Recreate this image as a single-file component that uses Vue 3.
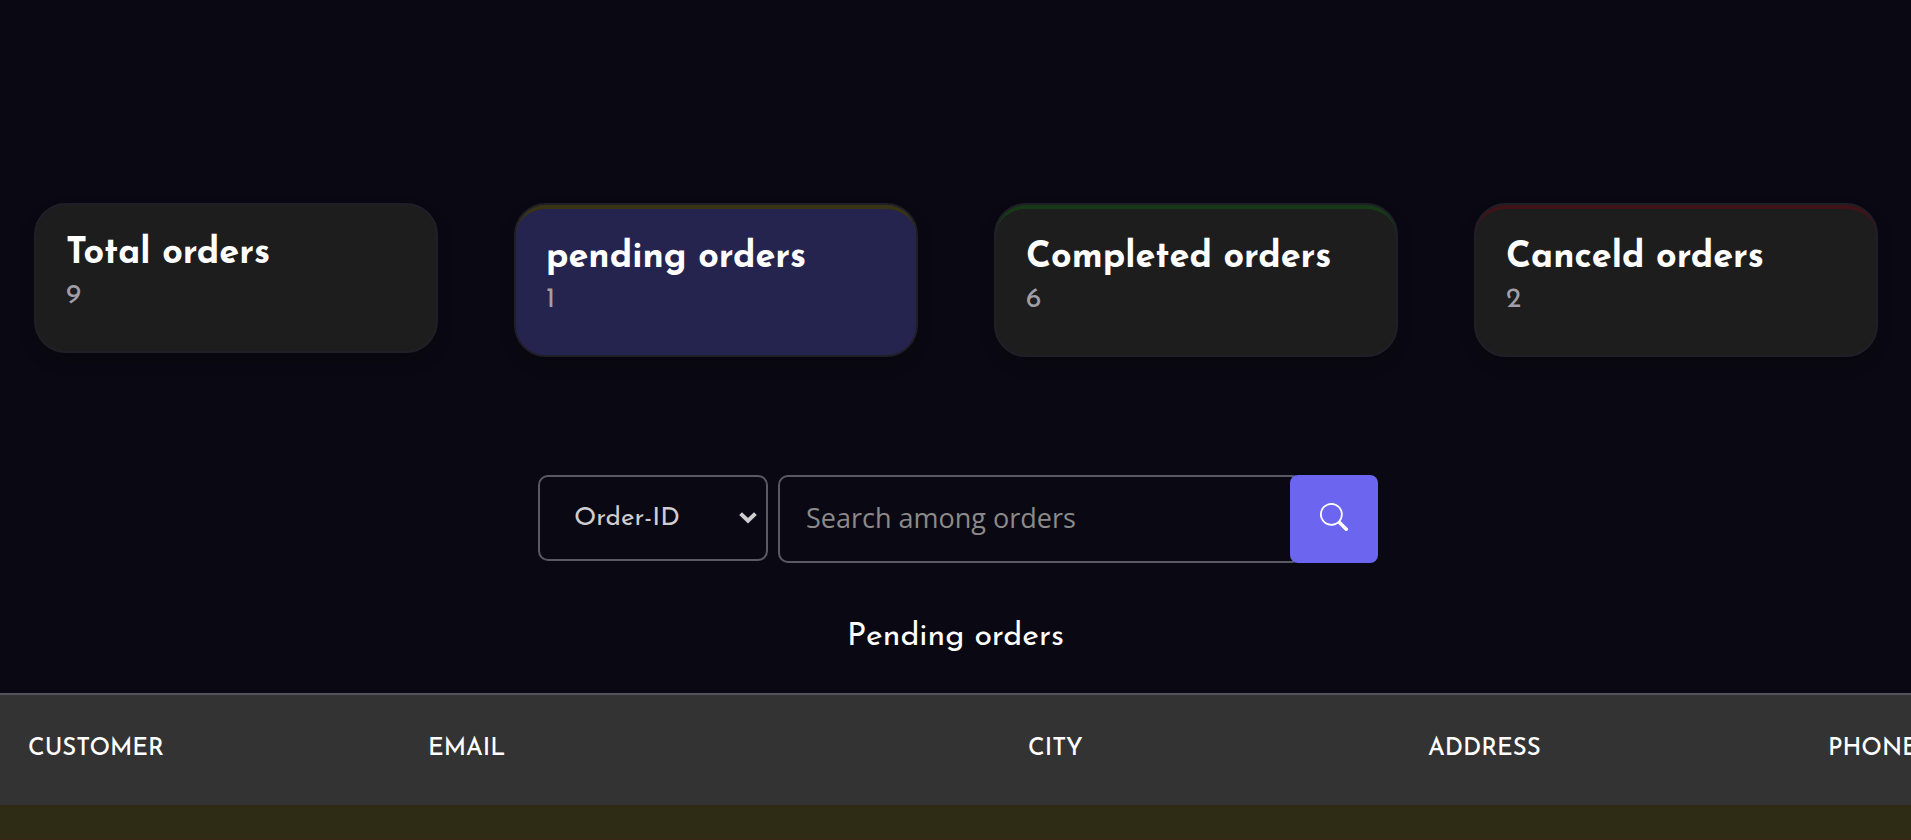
<script setup>
import { ref } from 'vue'

const cards = [
  { title: 'Total orders', count: 9, tone: 'total' },
  { title: 'pending orders', count: 1, tone: 'pending' },
  { title: 'Completed orders', count: 6, tone: 'completed' },
  { title: 'Canceld orders', count: 2, tone: 'canceled' },
]
const columns = ['customer', 'email', 'city', 'address', 'phone']
const field = ref('Order-ID')
const query = ref('')
</script>

<template>
  <main class="page">
    <section class="cards">
      <article v-for="card in cards" :key="card.tone" class="card" :class="card.tone">
        <div class="card-body">
          <h2>{{ card.title }}</h2>
          <p>{{ card.count }}</p>
        </div>
      </article>
    </section>

    <form class="search" @submit.prevent>
      <div class="picker">
        <select v-model="field" aria-label="Search field">
          <option>Order-ID</option>
        </select>
        <svg class="chevron" viewBox="0 0 18 12" aria-hidden="true">
          <path d="M1.6 1.6 L9 8.8 L16.4 1.6" fill="none" stroke="#cfcdd0" stroke-width="4" />
        </svg>
      </div>
      <div class="query">
        <input v-model="query" type="text" placeholder="Search among orders" aria-label="Search among orders" />
        <button type="submit" aria-label="Search">
          <svg viewBox="0 0 16 16" fill="currentColor" aria-hidden="true">
            <path d="M11.742 10.344a6.5 6.5 0 1 0-1.397 1.398h-.001c.03.04.062.078.098.115l3.85 3.85a1 1 0 0 0 1.415-1.414l-3.85-3.85a1.007 1.007 0 0 0-.115-.1zM12 6.5a5.5 5.5 0 1 1-11 0 5.5 5.5 0 0 1 11 0z" />
          </svg>
        </button>
      </div>
    </form>

    <h1>Pending orders</h1>

    <div class="table-wrap">
      <table>
        <thead>
          <tr>
            <th v-for="name in columns" :key="name" :class="name" scope="col">{{ name }}</th>
          </tr>
        </thead>
        <tbody>
          <tr>
            <td v-for="name in columns" :key="name"></td>
          </tr>
        </tbody>
      </table>
    </div>
  </main>
</template>

<style>
body {
  margin: 0;
  background: #0a0812;
}
</style>

<style scoped>
* {
  box-sizing: border-box;
}
.page {
  min-height: 100vh;
  padding-top: 203px;
  background: #0a0812;
  color: #fff;
  font-family: "Josefin Sans", Lato, sans-serif;
}
.cards {
  display: grid;
  grid-template-columns: repeat(4, 1fr);
  gap: 76px;
  align-items: start;
  min-height: 154px;
  padding: 0 33px 0 34px;
}
.card {
  border: 2px solid #201f28;
  border-radius: 32px;
  background: #1d1d1e;
  box-shadow: 0 8px 16px rgba(0, 0, 0, 0.15);
}
.card-body {
  padding: 26px 30px 36px;
  border-radius: 30px;
}
.pending,
.pending .card-body {
  background: #25244f;
}
.pending .card-body {
  border-top: 4px solid #383413;
}
.completed .card-body {
  border-top: 4px solid #163a18;
}
.canceled .card-body {
  border-top: 4px solid #401417;
}
.card h2 {
  margin: 0;
  font-size: 36px;
  font-weight: 700;
  line-height: 46px;
}
.card p {
  margin: 0;
  color: #a09fa8;
  font-size: 28px;
  line-height: 38px;
}
.search {
  display: flex;
  justify-content: center;
  align-items: flex-start;
  gap: 10px;
  margin-top: 118px;
  padding-left: 5px;
}
.picker {
  position: relative;
  width: 230px;
}
select {
  display: block;
  width: 100%;
  height: 86px;
  padding: 0 34px;
  border: 2px solid #5b5a64;
  border-radius: 10px;
  appearance: none;
  background: transparent;
  color: #cfcdd0;
  font: 26px "Josefin Sans", Lato, sans-serif;
}
.chevron {
  position: absolute;
  top: 37px;
  right: 11px;
  width: 18px;
  height: 12px;
  pointer-events: none;
}
.query {
  display: flex;
  width: 600px;
  height: 88px;
}
input {
  flex: 1;
  min-width: 0;
  margin-right: -12px;
  padding: 0 26px 4px;
  border: 2px solid #5b5a64;
  border-radius: 10px;
  background: transparent;
  color: #fff;
  font: 500 27px "Segoe UI", "Open Sans", sans-serif;
}
input::placeholder {
  color: #8b8a8b;
  opacity: 1;
}
button {
  display: grid;
  place-items: center;
  position: relative;
  width: 88px;
  padding: 0 0 4px;
  border: 0;
  border-radius: 8px;
  background: #6b65f0;
  color: #fff;
}
button svg {
  width: 28px;
  height: 28px;
}
h1 {
  margin: 54px 0 36px;
  font-size: 32px;
  font-weight: 400;
  line-height: 40px;
  text-align: center;
}
.table-wrap {
  overflow: hidden;
}
table {
  width: 2200px;
  border-collapse: separate;
  border-spacing: 0;
  table-layout: fixed;
}
th {
  width: 400px;
  height: 112px;
  padding: 0 28px 2px;
  border-top: 2px solid #55545c;
  background: #333;
  font-size: 24px;
  font-weight: 500;
  line-height: 32px;
  text-align: left;
  text-transform: uppercase;
}
th.email {
  width: 600px;
}
td {
  height: 35px;
  padding: 0;
  border-bottom: 1px solid #3a2517;
  background: #2f2c15;
}
</style>
